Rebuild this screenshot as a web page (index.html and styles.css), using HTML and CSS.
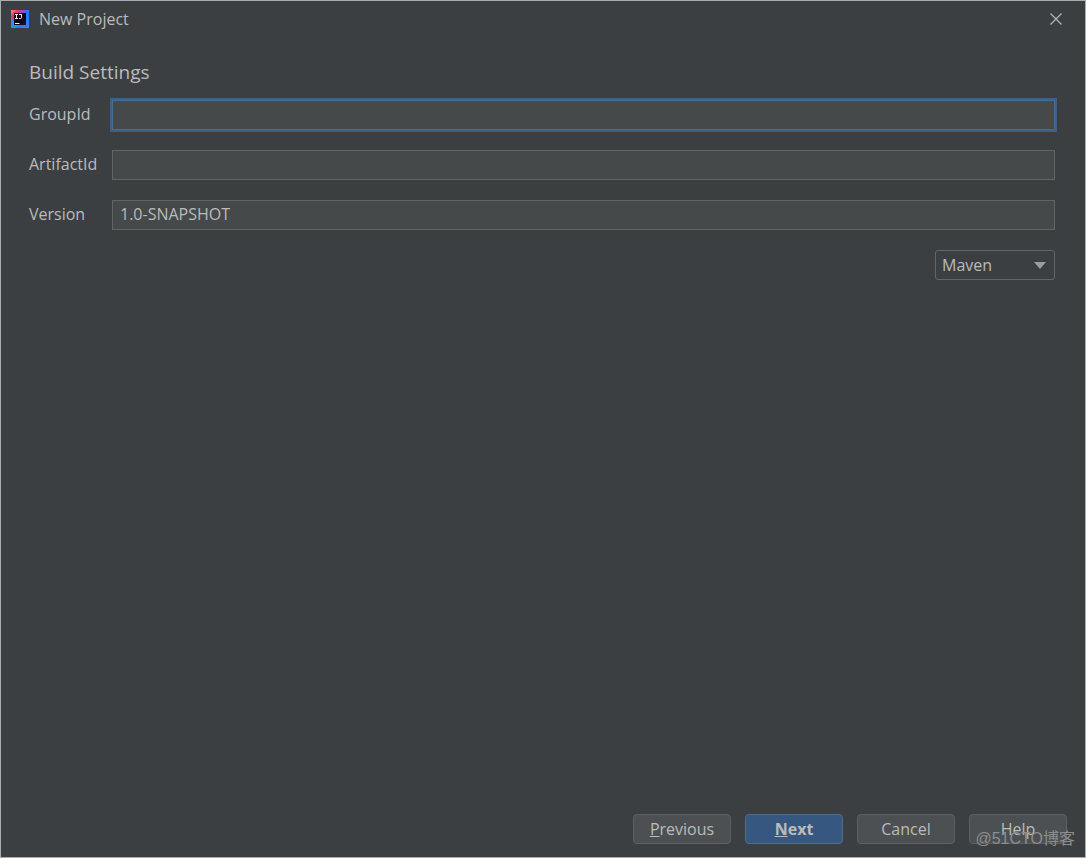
FILE: index.html
```html
<!DOCTYPE html>
<html lang="en">
<head>
<meta charset="utf-8">
<title>New Project</title>
<link rel="stylesheet" href="styles.css">
</head>
<body>
<div class="window">
  <header class="titlebar">
    <svg class="app-icon" viewBox="0 0 18 18" aria-hidden="true">
      <defs>
        <linearGradient id="frame" x1="0" y1="0" x2="1" y2="1">
          <stop offset="0" stop-color="#fca04a"/>
          <stop offset=".2" stop-color="#f0356c"/>
          <stop offset=".38" stop-color="#8d4fc4"/>
          <stop offset=".5" stop-color="#1f7cf4"/>
          <stop offset="1" stop-color="#3f7cf8"/>
        </linearGradient>
        <linearGradient id="core" x1="0" y1="0" x2="1" y2="1">
          <stop offset="0" stop-color="#1c0612"/>
          <stop offset=".6" stop-color="#0a0410"/>
          <stop offset="1" stop-color="#2a1230"/>
        </linearGradient>
      </defs>
      <rect width="18" height="18" fill="url(#frame)"/>
      <path d="M0 8l3 2v5H0z" fill="#2f8cf8"/>
      <path d="M0 15h8l-3 3H0z" fill="#08a0f4"/>
      <rect x="3" y="3" width="12" height="12" fill="url(#core)"/>
      <path d="M4 4.500h3M5.500 4.500v4M4 8.500h3M8 4.500h2.500v3q0 1-1 1H8" fill="none" stroke="#f4eef2" stroke-width="1"/>
      <path d="M4 13.500h4.500" stroke="#f4eef2" stroke-width="1"/>
    </svg>
    <h1 class="title">New Project</h1>
    <button class="close" type="button" aria-label="Close">
      <svg class="close-icon" viewBox="0 0 14 14" aria-hidden="true"><path d="M1.500 1.500l11 11M12.500 1.500l-11 11"/></svg>
    </button>
  </header>
  <form class="form">
    <div class="content">
      <h2 class="heading">Build Settings</h2>
      <div class="fields">
        <label class="label" for="group">GroupId</label>
        <input class="field field-active" id="group" type="text">
        <label class="label" for="artifact">ArtifactId</label>
        <input class="field" id="artifact" type="text">
        <label class="label" for="version">Version</label>
        <input class="field" id="version" type="text" value="1.0-SNAPSHOT">
      </div>
      <div class="picker">
        <select class="select" aria-label="Build system"><option>Maven</option></select>
        <svg class="arrow" viewBox="0 0 12 7" aria-hidden="true"><path d="M0 0h12L6 7z"/></svg>
      </div>
    </div>
    <footer class="actions">
      <button class="button" type="button"><u>P</u>revious</button>
      <button class="button button-primary" type="button"><u>N</u>ext</button>
      <button class="button" type="button">Cancel</button>
      <button class="button" type="button">Help</button>
    </footer>
  </form>
  <span class="watermark">@51CTO博客</span>
</div>
</body>
</html>
```
FILE: styles.css
```css
* {
  box-sizing: border-box;
}

body {
  margin: 0;
  background: #3c3f41;
  color: #bbbbbb;
  font-family: "Open Sans", "Noto Sans", "Noto Sans CJK SC", sans-serif;
  font-size: 16px;
  line-height: 20px;
}

button,
input,
select {
  font: inherit;
  color: inherit;
}

.window {
  position: relative;
  display: flex;
  flex-direction: column;
  min-height: 100vh;
  border: 1px solid #a9adac;
}

.titlebar {
  display: flex;
  align-items: center;
  gap: 10px;
  height: 36px;
  padding: 0 15px 0 10px;
}

.app-icon {
  width: 18px;
  height: 18px;
}

.title {
  flex: 1;
  margin: 0;
  font-size: 16px;
  font-weight: 400;
}

.close {
  display: flex;
  padding: 7px;
  border: 0;
  background: none;
}

.close-icon {
  width: 14px;
  height: 14px;
  fill: none;
  stroke: #b4b6b7;
  stroke-width: 1.2;
}

.form {
  display: flex;
  flex: 1;
  flex-direction: column;
  justify-content: space-between;
}

.content {
  padding: 23px 30px 0 28px;
}

.heading {
  margin: 0 0 16px;
  font-size: 19px;
  font-weight: 400;
  line-height: 24px;
}

.fields {
  display: grid;
  grid-template-columns: 68px 1fr;
  align-items: center;
  gap: 20px 15px;
}

.label {
  padding-bottom: 2px;
}

.field {
  width: 100%;
  height: 30px;
  padding: 0 7px 2px;
  border: 1px solid #646464;
  border-radius: 0;
  outline: 0;
  background: #45494a;
}

.field-active {
  border-color: #466d94;
  box-shadow: 0 0 0 2px #3d6185;
}

.picker {
  position: relative;
  width: 120px;
  margin: 20px 0 0 auto;
}

.select {
  display: block;
  width: 100%;
  height: 30px;
  padding: 0 28px 0 6px;
  border: 1px solid #646464;
  border-radius: 3px;
  appearance: none;
  background: #3c3f41;
}

.arrow {
  position: absolute;
  top: 12px;
  right: 9px;
  width: 12px;
  height: 7px;
  fill: #9a9da0;
  pointer-events: none;
}

.actions {
  display: flex;
  justify-content: flex-end;
  gap: 14px;
  padding: 0 18px 13px;
}

.button {
  width: 98px;
  height: 30px;
  padding: 0;
  border: 1px solid #5e6060;
  border-radius: 4px;
  background: #4c5052;
}

.button-primary {
  border-color: #4c708c;
  background: #365880;
  font-weight: 700;
}

.watermark {
  position: absolute;
  right: 10px;
  bottom: 8px;
  color: #8b8d8e;
  font-family: "Liberation Sans", "Noto Sans CJK SC", sans-serif;
  font-size: 16px;
  pointer-events: none;
}
```
